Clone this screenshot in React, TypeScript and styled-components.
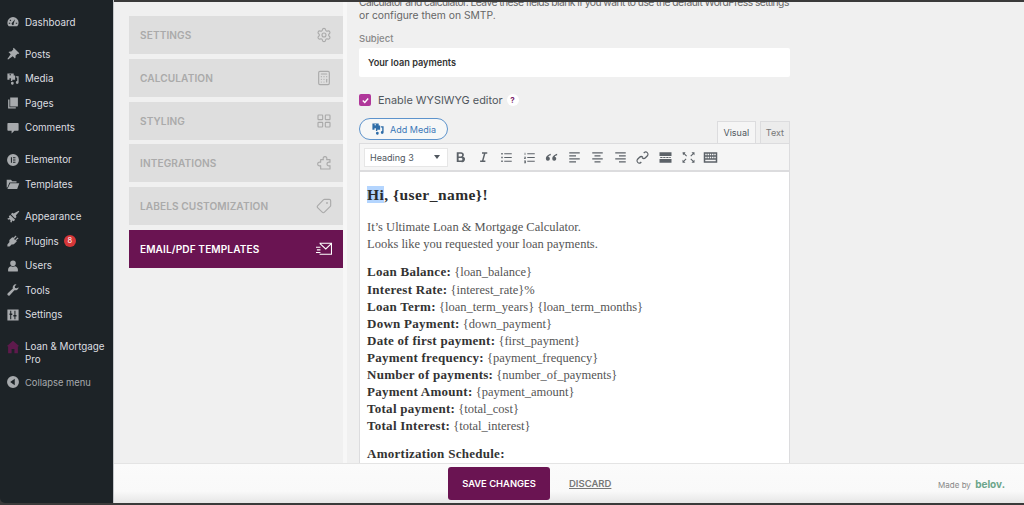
import React from 'react';
import styled, { createGlobalStyle } from 'styled-components';
import { Settings, Calculator, LayoutGrid, Tag } from 'lucide-react';

const GlobalStyle = createGlobalStyle`
  html, body { margin: 0; padding: 0; height: 100%; background: #3a3a3a; overflow: hidden; }
  #root { height: 100%; }
  * { box-sizing: border-box; }
`;

const Frame = styled.div`
  width: 1024px;
  height: 505px;
  padding: 2px 0 2px;
  display: flex;
  font-family: Inter, "Liberation Sans", sans-serif;
  background: #3a3a3a;
`;

const Sidebar = styled.nav`
  width: 114px;
  flex: none;
  margin-top: -2px;
  padding-top: 10px;
  background: #1d2327;
  border-right: 1px solid #c4c7ca;
  border-bottom-left-radius: 5px;
`;

const MenuItem = styled.div<{ $gap?: boolean; $muted?: boolean; $tall?: boolean }>`
  display: flex;
  align-items: ${p => (p.$tall ? 'flex-start' : 'center')};
  height: ${p => (p.$tall ? '37px' : p.$muted ? '22px' : '24.5px')};
  margin-top: ${p => (p.$gap ? '7.6px' : '0')};
  padding: ${p => (p.$tall ? '6px' : '0')} 0 0 6px;
  font-size: ${p => (p.$muted ? '9.4px' : '9.8px')};
  line-height: 13px;
  color: ${p => (p.$muted ? '#a7aaad' : '#dcdee0')};
`;

const MenuIcon = styled.svg<{ $color?: string }>`
  width: 14px;
  height: 14px;
  flex: none;
  margin-right: 5px;
  fill: ${p => p.$color ?? '#a7aaad'};
`;

const Badge = styled.span`
  width: 12px;
  height: 12px;
  margin-left: 5px;
  border-radius: 50%;
  background: #d63638;
  color: #fff;
  font-size: 7.5px;
  line-height: 12px;
  text-align: center;
`;

const Workspace = styled.div`
  flex: 1;
  min-width: 0;
  display: flex;
  flex-direction: column;
  background: #f0f0f0;
`;

const Body = styled.div`
  flex: 1;
  min-height: 0;
  display: flex;
  overflow: hidden;
`;

const TabColumn = styled.div`
  width: 233px;
  flex: none;
  padding: 14.4px 0 0 15px;
  display: flex;
  flex-direction: column;
  gap: 4.7px;
  border-right: 4px solid #f7f7f7;
`;

const Tab = styled.div<{ $active?: boolean }>`
  height: 38px;
  padding: 0 11px;
  display: flex;
  align-items: center;
  justify-content: space-between;
  background: ${p => (p.$active ? '#6a1452' : '#dedede')};
  color: ${p => (p.$active ? '#ffffff' : '#aaaaaa')};
  font-size: 10.1px;
  font-weight: 600;
  letter-spacing: 0.1px;
  svg { width: 16px; height: 16px; flex: none; }
`;

const FlippedTag = styled(Tag)`
  transform: scaleX(-1);
`;

const Panel = styled.div`
  width: 431px;
  margin: -6px 0 0 12px;
  flex: none;
`;

const Description = styled.p`
  margin: 0;
  font-size: 10.3px;
  line-height: 13px;
  color: #666;
  white-space: nowrap;
`;

const TightLine = styled.span`
  letter-spacing: -0.55px;
`;

const FieldLabel = styled.div`
  margin-top: 10px;
  font-size: 9.5px;
  line-height: 13px;
  font-weight: 500;
  color: #888;
`;

const SubjectInput = styled.div`
  height: 29px;
  margin-top: 3px;
  padding: 0 9px;
  display: flex;
  align-items: center;
  background: #fff;
  border-radius: 2px;
  font-size: 9.2px;
  font-weight: 600;
  color: #333;
`;

const CheckRow = styled.div`
  height: 16px;
  margin-top: 15px;
  display: flex;
  align-items: center;
  font-size: 10.9px;
  color: #50575e;
`;

const CheckBox = styled.span`
  width: 12px;
  height: 12px;
  margin-right: 7px;
  border-radius: 2px;
  background: #b0379a;
  display: flex;
  align-items: center;
  justify-content: center;
  svg { width: 9px; height: 9px; }
`;

const Help = styled.span`
  width: 12px;
  height: 12px;
  margin-left: 4px;
  border-radius: 50%;
  background: #fff;
  color: #7d1f6c;
  font-size: 8px;
  font-weight: 700;
  line-height: 12px;
  text-align: center;
`;

const MediaRow = styled.div`
  height: 25px;
  margin-top: 10px;
  display: flex;
  justify-content: space-between;
  align-items: flex-end;
`;

const AddMedia = styled.button`
  width: 89px;
  height: 22px;
  margin-bottom: 3px;
  padding: 0;
  display: flex;
  align-items: center;
  justify-content: center;
  gap: 5px;
  background: #f6f7f7;
  border: 1px solid #5d93cc;
  border-radius: 11px;
  color: #3b78b8;
  font: 400 9px Inter, sans-serif;
  svg { width: 14px; height: 14px; fill: #2f6da8; }
`;

const ViewTabs = styled.div`
  display: flex;
  gap: 4px;
`;

const ViewTab = styled.div<{ $active?: boolean }>`
  height: 22px;
  padding: 0 5px;
  min-width: ${p => (p.$active ? '39px' : '30px')};
  display: flex;
  align-items: center;
  justify-content: center;
  font-size: 9px;
  color: ${p => (p.$active ? '#50575e' : '#777')};
  background: ${p => (p.$active ? '#f5f5f5' : '#ececec')};
  border: 1px solid #dcdcde;
  border-bottom: none;
`;

const Toolbar = styled.div`
  height: 29px;
  padding: 0 4px;
  display: flex;
  align-items: center;
  background: #f5f5f5;
  border: 1px solid #dcdcde;
  border-bottom: 2px solid #dcdcde;
`;

const FormatSelect = styled.div`
  width: 84px;
  height: 19px;
  margin-right: 1.500px;
  padding: 0 7px 0 5px;
  display: flex;
  align-items: center;
  justify-content: space-between;
  background: #fff;
  border: 1px solid #e6e6e6;
  font-size: 9px;
  color: #50575e;
  &::after {
    content: '';
    border: 3.5px solid transparent;
    border-top: 4px solid #50575e;
    border-bottom: none;
  }
`;

const ToolIcon = styled.svg`
  width: 15px;
  height: 15px;
  margin: 0 3.85px 0 3.9px;
  flex: none;
  fill: #5c6268;
`;

const Editor = styled.div`
  padding: 13px 6px 0 7px;
  height: 320px;
  background: #fff;
  border: 1px solid #dcdcde;
  border-top: none;
  font-family: "Liberation Serif", serif;
  font-size: 12.5px;
  line-height: 17.1px;
  color: #555;
  strong { color: #333; font-size: 13px; font-weight: 700; letter-spacing: 0.27px; }
`;

const Heading = styled.h3`
  margin: 0 0 13.5px;
  font-size: 15.5px;
  line-height: 20px;
  font-weight: 700;
  letter-spacing: 0.45px;
  color: #2c2c2c;
`;

const Selected = styled.span`
  background: #b4d5fe;
`;

const Para = styled.p`
  margin: 0 0 10.8px;
`;

const Line = styled.div`
  height: 17.1px;
`;

const Footer = styled.footer`
  height: 40px;
  flex: none;
  padding-left: 334px;
  padding-right: 19px;
  display: flex;
  align-items: center;
  background: linear-gradient(180deg, #fbfbfb 0%, #f9f9f9 70%, #e6e6e6 100%);
  border-top: 1px solid #e4e4e4;
`;

const SaveButton = styled.button`
  width: 102px;
  height: 33px;
  padding: 0;
  border: none;
  border-radius: 3px;
  background: #6a1452;
  color: #fff;
  font: 600 9.4px Inter, sans-serif;
`;

const Discard = styled.a`
  margin-left: 19px;
  font-size: 9.5px;
  font-weight: 600;
  color: #777;
  text-decoration: underline;
`;

const MadeBy = styled.div`
  margin-left: auto;
  font-size: 8px;
  color: #888;
  b { margin-left: 2px; font-size: 10px; font-weight: 700; color: #6ba58a; }
`;

const sideIcons: Record<string, string> = {
  dashboard: 'M10 3a8 8 0 0 0-8 8c0 2 .7 3.800 2 5.200h12A8 8 0 0 0 18 11a8 8 0 0 0-8-8zM6 6.500l1.500 1.500-1 1-1.500-1.500zM4 11h2v1.500H4zm10 1.500V11h2v1.500zm-4 2a2 2 0 0 1-1-3.700L13 6l-2 6a2 2 0 0 1-1 2.500z',
  pin: 'M11 1l8 8-1.500 1-1-.5-3 3c.5 1.500.3 3-.7 4l-3.200-3.200L3 18l-1-1 4.700-6.500-3.200-3.200c1-1 2.500-1.200 4-.7l3-3-.5-1z',
  media: 'M2 2h9v3h2v6H9v2H7V9H5v2H2zm4 3a1 1 0 1 0 0-2 1 1 0 0 0 0 2zm8 1h4v9a2 2 0 1 1-2-2V8h-2zM9 14a2 2 0 1 1-1 3.700 2 2 0 0 1 1-3.700z',
  pages: 'M6 2h11v13H6zM3 5h2v11h9v2H3z',
  comment: 'M3 3h14a1 1 0 0 1 1 1v9a1 1 0 0 1-1 1h-5l-4 4v-4H3a1 1 0 0 1-1-1V4a1 1 0 0 1 1-1z',
  elementor: 'M10 1.500a8.500 8.500 0 1 0 0 17 8.500 8.500 0 0 0 0-17zM7 6h1.500v8H7zm3 0h3.500v1.500H10zm0 3.200h3.500v1.500H10zm0 3.300h3.500V14H10z',
  folder: 'M1 4h6l2 2h6v2H5L2 15H1zm5 5h13l-3 8H2z',
  brush: 'M19 2l-1-1-7 4-2-1-2 2 6 6 2-2-1-2zM6 7l7 7-2 2-2-1-1 3-2-1 1-3-1 1-1-1 1-1-3 1-1-2 3-1-1-2z',
  plugin: 'M14 2l-3.500 3.500-1.500-1-3.500 3.500c-1 1-1 2.500-.5 3.500L2 15v3h3l3.500-3.500c1 .5 2.500.5 3.500-.5l3.500-3.500-1-1.500L18 6l-1.500-1L13 8.500 11.500 7 15 3.500z',
  user: 'M10 2a4 4 0 1 1 0 8 4 4 0 0 1 0-8zM3 17v-2c0-2.500 2.500-4.500 4-4.500 1 .7 4.500.7 6 0 1.500 0 4 2 4 4.500v2a1 1 0 0 1-1 1H4a1 1 0 0 1-1-1z',
  wrench: 'M18 6a4.500 4.500 0 0 1-6 4.200L5.500 17.500a1.800 1.800 0 0 1-3-2.800L9.800 8A4.500 4.500 0 0 1 15 2l-2.500 2.500.5 2.500 2.500.5z',
  sliders: 'M2 2h16v16H2zm4 2v4H5v2h1v6h1.500v-6H9V8H7.500V4zm6 0v6h-1.500v2H12v4h1.500v-4H15v-2h-1.500V4z',
  home: 'M10 1l9 8h-2v10h-5v-6H8v6H3V9H1z',
  collapse: 'M10 1.500a8.500 8.500 0 1 0 0 17 8.500 8.500 0 0 0 0-17zM12.500 5.500v9L6 10z',
};

type MenuEntry = { label: string; icon: string; gap?: boolean; badge?: string };

const menu: MenuEntry[] = [
  { label: 'Dashboard', icon: 'dashboard' },
  { label: 'Posts', icon: 'pin', gap: true },
  { label: 'Media', icon: 'media' },
  { label: 'Pages', icon: 'pages' },
  { label: 'Comments', icon: 'comment' },
  { label: 'Elementor', icon: 'elementor', gap: true },
  { label: 'Templates', icon: 'folder' },
  { label: 'Appearance', icon: 'brush', gap: true },
  { label: 'Plugins', icon: 'plugin', badge: '8' },
  { label: 'Users', icon: 'user' },
  { label: 'Tools', icon: 'wrench' },
  { label: 'Settings', icon: 'sliders' },
];

const SideIcon = ({ name, color }: { name: string; color?: string }) => (
  <MenuIcon viewBox="0 0 20 20" $color={color}>
    <path d={sideIcons[name]} fillRule="evenodd" />
  </MenuIcon>
);

const MailSend = () => (
  <svg viewBox="0 0 18 16" fill="none" stroke="#fff" strokeWidth="1.200">
    <path d="M4 1.500h13.400v12.500H4M4.500 2l6.500 6 6.200-6" />
    <path d="M0 6h5M1 9h4M0 12h5" />
  </svg>
);

const PuzzlePiece = () => (
  <svg viewBox="0 0 24 24" fill="none" stroke="currentColor" strokeWidth="1.700" strokeLinejoin="round">
    <path d="M7 21V16C4 17 2.500 15.500 2.500 13.500S4 10 7 11V7h4C10 4 11.500 2.500 13.500 2.500S17 4 16 7h5v4c-3-1-4.500.5-4.500 2.500S18 17 21 16v5z" />
  </svg>
);

const toolPaths: string[] = [
  'M5 3h6a3.500 3.500 0 0 1 2.500 6A3.700 3.700 0 0 1 11 16H5zm2.500 2v3.500H10.500a1.700 1.700 0 0 0 0-3.500zm0 5.500V14h3.300a1.700 1.700 0 0 0 0-3.500z',
  'M8 3h7v2h-2.500l-2.500 9H12.500v2h-7v-2H8l2.500-9H8z',
  'M3 4h2v2H3zm4 .300h10v1.400H7zM3 9h2v2H3zm4 .300h10v1.400H7zM3 14h2v2H3zm4 .300h10v1.400H7z',
  'M3.500 3.500h1v3h-1zM7 4.300h10v1.400H7zM2.800 9h2.400v1l-1.400 1h1.400v1H2.800v-1l1.400-1H2.800zM7 9.300h10v1.400H7zM2.800 14h2.400v3.500H2.800v-1h1.400v-.300H3v-.800h1.200V15H2.800zM7 14.300h10v1.400H7z',
  'M9 5C6 6 2.500 8 2.500 11.500a2.700 2.700 0 1 0 3.300-2.600c.3-.9 1.600-1.700 3.200-2zm8.500 0c-3 1-6.500 3-6.500 6.500a2.700 2.700 0 1 0 3.300-2.600c.3-.9 1.600-1.700 3.200-2z',
  'M3 3h14v1.700H3zm0 4h9v1.700H3zm0 4h14v1.700H3zm0 4h9v1.700H3z',
  'M3 3h14v1.700H3zm3 4h8v1.700H6zm-3 4h14v1.700H3zm3 4h8v1.700H6z',
  'M3 3h14v1.700H3zm5 4h9v1.700H8zm-5 4h14v1.700H3zm5 4h9v1.700H8z',
  'M11 3.500l1-1a4 4 0 0 1 5.500 5.500l-3 3a4 4 0 0 1-5.500 0l1.300-1.300a2.200 2.200 0 0 0 3 0l3-3a2.200 2.200 0 0 0-3-3l-1 1zM9 16.500l-1 1A4 4 0 0 1 2.500 12l3-3a4 4 0 0 1 5.500 0L9.700 10.300a2.200 2.200 0 0 0-3 0l-3 3a2.200 2.200 0 0 0 3 3l1-1z',
  'M2 3h16v5H2zm0 9h16v5H2zM3 9.300h3v1.400H3zm4 0h3v1.400H7zm4 0h3v1.400h-3zm4 0h2v1.400h-2z',
  'M2 3h4L5 4.500 8 7.500 7 8.500 4 5.500 2.700 7zm16 0v4L16.500 5.700 13.500 8.500 12.500 7.500 15.500 4.500 14 3zM2 17v-4l1.300 1.300 3-3 1 1-3 3L6 17zm16 0h-4l1.500-1.700-3-3 1-1 3 3L18 13z',
  'M1 3h18v14H1zm2 2v2h2V5zm3 0v2h2V5zm3 0v2h2V5zm3 0v2h2V5zm3 0v2h2V5zM3 9v2h2V9zm3 0v2h2V9zm3 0v2h2V9zm3 0v2h2V9zm3 0v2h2V9zM3 13v2h14v-2z',
];

const fields: [string, string][] = [
  ['Loan Balance:', '{loan_balance}'],
  ['Interest Rate:', '{interest_rate}%'],
  ['Loan Term:', '{loan_term_years} {loan_term_months}'],
  ['Down Payment:', '{down_payment}'],
  ['Date of first payment:', '{first_payment}'],
  ['Payment frequency:', '{payment_frequency}'],
  ['Number of payments:', '{number_of_payments}'],
  ['Payment Amount:', '{payment_amount}'],
  ['Total payment:', '{total_cost}'],
  ['Total Interest:', '{total_interest}'],
];

const tabs = [
  { label: 'Settings', icon: <Settings strokeWidth={1.7} /> },
  { label: 'Calculation', icon: <Calculator strokeWidth={1.7} /> },
  { label: 'Styling', icon: <LayoutGrid strokeWidth={1.7} /> },
  { label: 'Integrations', icon: <PuzzlePiece /> },
  { label: 'Labels Customization', icon: <FlippedTag strokeWidth={1.7} /> },
  { label: 'Email/PDF Templates', icon: <MailSend />, active: true },
];

export default function App() {
  return (
    <Frame>
      <GlobalStyle />
      <Sidebar>
        {menu.map(item => (
          <MenuItem key={item.label} $gap={item.gap}>
            <SideIcon name={item.icon} />
            {item.label}
            {item.badge && <Badge>{item.badge}</Badge>}
          </MenuItem>
        ))}
        <MenuItem $gap $tall>
          <SideIcon name="home" color="#5e1a4c" />
          <span>Loan &amp; Mortgage Pro</span>
        </MenuItem>
        <MenuItem $muted>
          <SideIcon name="collapse" />
          Collapse menu
        </MenuItem>
      </Sidebar>
      <Workspace>
        <Body>
          <TabColumn>
            {tabs.map(tab => (
              <Tab key={tab.label} $active={tab.active}>
                {tab.label.toUpperCase()}
                {tab.icon}
              </Tab>
            ))}
          </TabColumn>
          <Panel>
            <Description>
              <TightLine>Calculator and calculator. Leave these fields blank if you want to use the default WordPress settings</TightLine>
              <br />
              or configure them on SMTP.
            </Description>
            <FieldLabel>Subject</FieldLabel>
            <SubjectInput>Your loan payments</SubjectInput>
            <CheckRow>
              <CheckBox>
                <svg viewBox="0 0 10 10" fill="none" stroke="#fff" strokeWidth="1.600">
                  <path d="M2 5l2.200 2.200L8 2.800" />
                </svg>
              </CheckBox>
              Enable WYSIWYG editor
              <Help>?</Help>
            </CheckRow>
            <MediaRow>
              <AddMedia>
                <svg viewBox="0 0 20 20">
                  <path d={sideIcons.media} fillRule="evenodd" />
                </svg>
                Add Media
              </AddMedia>
              <ViewTabs>
                <ViewTab $active>Visual</ViewTab>
                <ViewTab>Text</ViewTab>
              </ViewTabs>
            </MediaRow>
            <Toolbar>
              <FormatSelect>Heading 3</FormatSelect>
              {toolPaths.map((d, i) => (
                <ToolIcon key={i} viewBox="0 0 20 20">
                  <path d={d} fillRule="evenodd" />
                </ToolIcon>
              ))}
            </Toolbar>
            <Editor>
              <Heading>
                <Selected>Hi</Selected>, {'{user_name}'}!
              </Heading>
              <Para>
                It’s Ultimate Loan &amp; Mortgage Calculator.
                <br />
                Looks like you requested your loan payments.
              </Para>
              <Para>
                {fields.map(([name, value]) => (
                  <Line key={name}>
                    <strong>{name}</strong> {value}
                  </Line>
                ))}
              </Para>
              <Para>
                <strong>Amortization Schedule:</strong>
              </Para>
            </Editor>
          </Panel>
        </Body>
        <Footer>
          <SaveButton>SAVE CHANGES</SaveButton>
          <Discard>DISCARD</Discard>
          <MadeBy>
            Made by <b>belov.</b>
          </MadeBy>
        </Footer>
      </Workspace>
    </Frame>
  );
}
